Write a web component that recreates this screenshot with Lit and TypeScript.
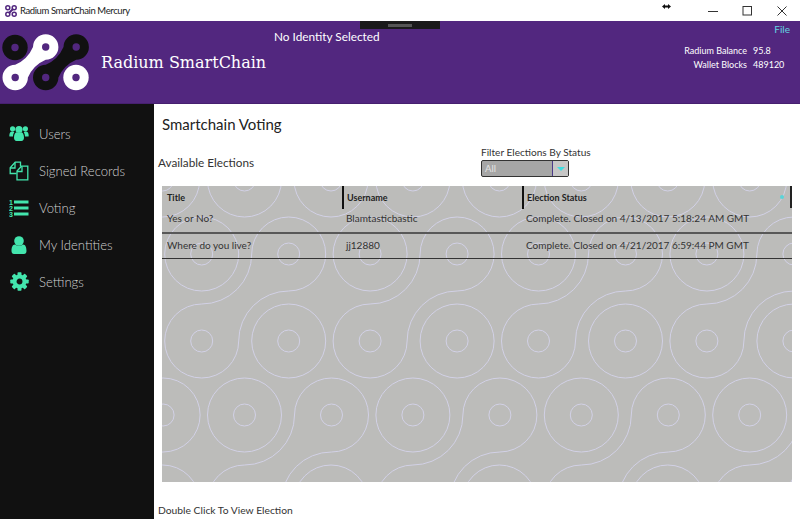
import { LitElement, css, html, svg } from "lit";
import { customElement } from "lit/decorators.js";

// dog-bone outline of one chain link: c1 lower left, c2 upper right
const linkPath = (x: number, y: number, r: number, s: number) => {
  const a = s - r;
  return `M${x} ${y - r}A${a} ${a} 0 0 0 ${x + a} ${y - s}` +
    `A${r} ${r} 0 1 1 ${x + s} ${y - a}` +
    `A${a} ${a} 0 0 0 ${x + r} ${y}` +
    `A${r} ${r} 0 1 1 ${x} ${y - r}Z`;
};

// same link with a thicker waist, for the solid logo
const solidLinkPath = (x: number, y: number, r: number, s: number) => {
  const a = s - r;
  return `M${x} ${y - r}Q${x + 0.7 * a} ${y - r - 0.3 * a} ${x + a} ${y - s}` +
    `A${r} ${r} 0 1 1 ${x + s} ${y - a}` +
    `Q${x + r + 0.3 * a} ${y - 0.7 * a} ${x + r} ${y}` +
    `A${r} ${r} 0 1 1 ${x} ${y - r}Z`;
};

const TILE_W = 168.4;

const buildPattern = () => {
  const rings: [number, number][] = [];
  const links: [number, number][] = [];
  for (let k = -1; k < 5; k++) {
    const dx = k * TILE_W;
    // upper pair of rows
    rings.push([201.7 + dx, 254], [288.7 + dx, 341]);
    links.push([201.7 + dx, 341]);
    // lower pair, also repeated one period up
    for (const dy of [0, -322]) {
      rings.push([244.5 + dx, 415 + dy], [331 + dx, 502 + dy]);
      links.push([244.5 + dx, 502 + dy]);
    }
  }
  const small = [...rings, ...links, ...links.map(([x, y]) => [x + 87, y - 87] as [number, number])];
  return { rings, links, small };
};

const pattern = buildPattern();

const logoLink = (x: number, y: number, fill: string) => svg`
  <path d=${solidLinkPath(x, y, 12.7, 30.5)} fill=${fill} />
  <circle cx=${x} cy=${y} r="3.7" fill="#52277f" />
  <circle cx=${x + 30.5} cy=${y - 30.5} r="3.7" fill="#52277f" />
`;

const logoRing = (x: number, y: number, fill: string) => svg`
  <circle cx=${x} cy=${y} r="12.7" fill=${fill} />
  <circle cx=${x} cy=${y} r="3.7" fill="#52277f" />
`;

const icons = {
  users: html`<svg viewBox="0 0 20 18" width="20" height="18">
    <circle cx="10" cy="4.5" r="3.6" /><circle cx="3.6" cy="3.8" r="2.6" /><circle cx="16.4" cy="3.8" r="2.6" />
    <path d="M0.3 11c0-3 1-4.4 3-4.4 1 0 1.6.4 2 .8-.9 1-1.3 2.3-1.3 4.2H1.6C.8 11.600.3 11.500.3 11Z" />
    <path d="M19.700 11c0-3-1-4.400-3-4.400-1 0-1.600.4-2 .8.9 1 1.300 2.300 1.300 4.200h2.400c.8 0 1.300-.1 1.300-.6Z" />
    <path d="M5 12.500c0-3.500 1.500-5.300 3-5.300.6.5 1.200.8 2 .8s1.400-.3 2-.8c1.500 0 3 1.800 3 5.300 0 2.300-1 3.500-2.500 3.500h-5C6 16 5 14.800 5 12.500Z" />
  </svg>`,
  records: html`<svg viewBox="0 0 20 20" width="20" height="20" fill="none" stroke="#43e5ad" stroke-width="1.300">
    <path d="M7.500 12.500H1.200V6.700L6.200 1.200H11.500V5.500" />
    <path d="M1.200 7H6V1.500" />
    <path d="M8 18.800V10L12.500 5.200H18.800V18.800Z" />
    <path d="M8 10.500H13V5.500" />
  </svg>`,
  voting: html`<svg viewBox="0 0 20 18" width="20" height="18">
    <text x="0" y="5.500" class="num">1</text><text x="0" y="11.500" class="num">2</text><text x="0" y="17.500" class="num">3</text>
    <rect x="5" y="1.500" width="14.500" height="3" /><rect x="5" y="7.500" width="14.500" height="3" /><rect x="5" y="13.500" width="14.500" height="3" />
  </svg>`,
  identity: html`<svg viewBox="0 0 16 18" width="16" height="18">
    <circle cx="8" cy="5" r="4.800" />
    <path d="M0.500 15c0-3.600 1-6.500 3.500-6.500 1.200.8 2.500 1.200 4 1.200s2.800-.4 4-1.200c2.500 0 3.500 2.900 3.500 6.500 0 2-1 3-2.500 3H3C1.500 18 .5 17 .5 15Z" />
  </svg>`,
  settings: html`<svg viewBox="0 0 20 20" width="19" height="19">
    <circle cx="10" cy="10" r="5.200" fill="none" stroke="#43e5ad" stroke-width="4.200" />
    ${[0, 45, 90, 135, 180, 225, 270, 315].map(
      (a) => svg`<rect x="7.900" y="0.300" width="4.200" height="4.500" rx="0.800" transform="rotate(${a} 10 10)" />`
    )}
  </svg>`,
};

const navItems = [
  { label: "Users", icon: icons.users },
  { label: "Signed Records", icon: icons.records },
  { label: "Voting", icon: icons.voting },
  { label: "My Identities", icon: icons.identity },
  { label: "Settings", icon: icons.settings },
];

const elections = [
  { title: "Yes or No?", user: "Blamtasticbastic", status: "Complete. Closed on 4/13/2017 5:18:24 AM GMT" },
  { title: "Where do you live?", user: "jj12880", status: "Complete. Closed on 4/21/2017 6:59:44 PM GMT" },
];

@customElement("app-root")
export class AppRoot extends LitElement {
  render() {
    return html`
      <div class="titlebar">
        <svg class="app-icon" viewBox="0 0 12 12" width="12" height="12" fill="none" stroke="#52277f">
          <circle cx="2.800" cy="2.800" r="2" stroke-width="1.500" />
          <circle cx="9.200" cy="2.800" r="2" stroke-width="1.500" />
          <circle cx="2.800" cy="9.200" r="2" stroke-width="1.500" />
          <circle cx="9.200" cy="9.200" r="2" stroke-width="1.500" />
          <path d="M3.800 8.200L8.200 3.800" stroke-width="2" />
        </svg>
        <span class="app-name">Radium SmartChain Mercury</span>
        <svg class="cursor" viewBox="0 0 9 5" width="9" height="5">
          <path d="M0 2.500L3 0v1.500h3V0l3 2.500L6 5V3.500H3V5Z" fill="#111" />
        </svg>
        <div class="controls">
          <span class="ctl"><svg viewBox="0 0 10 10" width="10" height="10"><path d="M0 5.500h10" stroke="#333" /></svg></span>
          <span class="ctl"><svg viewBox="0 0 10 10" width="10" height="10"><rect x="1" y="0.500" width="8.500" height="8.500" fill="none" stroke="#333" /></svg></span>
          <span class="ctl"><svg viewBox="0 0 10 10" width="10" height="10"><path d="M.5.500l9 9M9.500.500l-9 9" stroke="#333" /></svg></span>
        </div>
      </div>

      <header class="header">
        <div class="tab"><span class="tab-grip"></span></div>
        <svg class="logo" viewBox="0 0 91 60" width="91" height="60">
          ${logoRing(15, 14.5, "#111")}
          ${logoRing(76, 44.5, "#fff")}
          ${logoLink(15.2, 44.5, "#fff")}
          ${logoLink(45.7, 44.5, "#111")}
        </svg>
        <div class="brand">Radium SmartChain</div>
        <div class="identity">No Identity Selected</div>
        <div class="account">
          <span class="file">File</span>
          <div class="stats">
            <span>Radium Balance</span><span>95.8</span>
            <span>Wallet Blocks</span><span>489120</span>
          </div>
        </div>
      </header>

      <div class="body">
        <nav class="sidebar">
          ${navItems.map(
            (item) => html`
              <div class="nav-item">
                <span class="nav-icon">${item.icon}</span>
                <span>${item.label}</span>
              </div>
            `
          )}
        </nav>

        <main class="main">
          <h1 class="heading">Smartchain Voting</h1>
          <div class="toolbar">
            <div class="available">Available Elections</div>
            <div class="filter">
              <div class="filter-label">Filter Elections By Status</div>
              <div class="combo">
                <span class="combo-value">All</span>
                <span class="combo-btn"><span class="combo-arrow"></span></span>
              </div>
            </div>
          </div>

          <div class="table">
            <svg class="pattern" viewBox="162 186 630 296" width="630" height="296" fill="none" stroke="#d2d1e6">
              ${pattern.rings.map(([x, y]) => svg`<circle cx=${x} cy=${y} r="37" />`)}
              ${pattern.links.map(([x, y]) => svg`<path d=${linkPath(x, y, 37, 87)} />`)}
              ${pattern.small.map(([x, y]) => svg`<circle cx=${x} cy=${y} r="11" />`)}
            </svg>
            <div class="row head">
              <div>Title</div>
              <div>Username</div>
              <div>Election Status</div>
              <span class="sort-dot"></span>
            </div>
            ${elections.map(
              (e) => html`
                <div class="row item">
                  <div>${e.title}</div>
                  <div>${e.user}</div>
                  <div>${e.status}</div>
                </div>
              `
            )}
          </div>

          <div class="hint">Double Click To View Election</div>
        </main>
      </div>
    `;
  }

  static styles = css`
    :host {
      display: flex;
      flex-direction: column;
      width: 800px;
      height: 519px;
      overflow: hidden;
      background: #fff;
      font-family: Lato, "Open Sans", sans-serif;
      color: #2b2b2b;
    }

    .titlebar {
      position: relative;
      display: flex;
      align-items: center;
      flex: none;
      height: 21px;
      padding-left: 5px;
      background: #fff;
    }
    .app-icon {
      flex: none;
    }
    .app-name {
      margin-left: 3px;
      font-size: 9.500px;
      letter-spacing: -0.4px;
      color: #222;
    }
    .cursor {
      position: absolute;
      left: 662px;
      top: 4px;
    }
    .controls {
      display: flex;
      margin-left: auto;
      margin-right: 1px;
    }
    .ctl {
      display: flex;
      align-items: center;
      justify-content: center;
      width: 34.5px;
      height: 21px;
    }

    .header {
      position: relative;
      display: flex;
      flex: none;
      height: 83px;
      box-sizing: border-box;
      border-bottom: 1px solid #46206f;
      background: #52277f;
      color: #fff;
    }
    .tab {
      position: absolute;
      left: 360px;
      top: 0;
      display: flex;
      justify-content: center;
      width: 80px;
      height: 8px;
      background: #1a1a1a;
    }
    .tab-grip {
      width: 24px;
      height: 3px;
      margin-top: 3px;
      background: #555;
    }
    .logo {
      flex: none;
      margin-top: 12px;
    }
    .brand {
      flex: none;
      width: 173px;
      margin: 30px 0 0 10px;
      font-family: "DejaVu Serif", "Liberation Serif", serif;
      font-size: 16px;
      line-height: 24px;
      white-space: nowrap;
    }
    .identity {
      margin-top: 8px;
      font-size: 11.800px;
      line-height: 16px;
      white-space: nowrap;
    }
    .account {
      display: flex;
      flex-direction: column;
      align-items: flex-end;
      margin-left: auto;
      padding: 2px 10px 0 0;
    }
    .file {
      font-size: 10px;
      line-height: 12px;
      color: #63d2e2;
    }
    .stats {
      display: grid;
      grid-template-columns: auto 37px;
      column-gap: 6px;
      margin-top: 9px;
      font-size: 9px;
      line-height: 14px;
      text-align: right;
      white-space: nowrap;
    }
    .stats span:nth-child(even) {
      text-align: left;
    }

    .body {
      display: flex;
      flex: 1;
      min-height: 0;
    }
    .sidebar {
      flex: none;
      width: 154px;
      box-sizing: border-box;
      padding-top: 11px;
      background: #111;
      color: #d0d0d0;
    }
    .nav-item {
      display: flex;
      align-items: center;
      height: 37px;
      font-size: 13.100px;
      font-weight: 300;
      white-space: nowrap;
    }
    .nav-icon {
      display: flex;
      align-items: center;
      justify-content: center;
      flex: none;
      width: 20px;
      margin: 0 10px 0 9px;
      fill: #43e5ad;
    }
    .num {
      font-family: "Liberation Sans", sans-serif;
      font-size: 7px;
      font-weight: 700;
      fill: #43e5ad;
    }

    .main {
      flex: 1;
      min-width: 0;
      padding: 10px 0 0 4px;
    }
    .heading {
      margin: 0 0 0 4px;
      font-size: 15px;
      font-weight: 400;
      line-height: 20px;
      color: #222;
    }
    .toolbar {
      display: flex;
      height: 31px;
      margin: 12px 0 9px;
    }
    .available {
      width: 323px;
      margin-top: 9px;
      font-size: 11.750px;
      line-height: 16px;
      color: #333;
    }
    .filter-label {
      margin-top: -1px;
      font-size: 10.100px;
      line-height: 14px;
      color: #333;
    }
    .combo {
      display: flex;
      box-sizing: border-box;
      width: 88px;
      height: 17px;
      margin-top: 1px;
      border: 1px solid #333;
      border-radius: 2px;
      background: #a6a6a6;
    }
    .combo-value {
      flex: 1;
      padding-left: 3px;
      font-size: 9.500px;
      line-height: 15px;
      color: #e4e4e4;
    }
    .combo-btn {
      display: flex;
      align-items: center;
      justify-content: center;
      width: 15px;
      border-left: 1px solid #4b3a8a;
      background: #c6c6c6;
    }
    .combo-arrow {
      width: 0;
      height: 0;
      border-style: solid;
      border-width: 4px 4px 0;
      border-color: #3fdde0 transparent transparent;
    }

    .table {
      position: relative;
      width: 630px;
      height: 296px;
      margin-left: 4px;
      background: #bcbcba;
    }
    .pattern {
      position: absolute;
      inset: 0;
    }
    .row {
      position: relative;
      display: grid;
      grid-template-columns: 180px 180px 1fr;
      box-sizing: border-box;
    }
    .head {
      height: 22px;
      font-size: 9px;
      font-weight: 700;
      line-height: 23px;
      color: #222;
      border-right: 2px solid #222;
    }
    .head > div {
      padding-left: 5px;
    }
    .head > div + div {
      padding-left: 3px;
      border-left: 2px solid #111;
    }
    .sort-dot {
      position: absolute;
      right: 6px;
      top: 9px;
      width: 4px;
      height: 4px;
      border-radius: 50%;
      background: #5ad4d8;
    }
    .item {
      height: 26px;
      font-size: 10px;
      line-height: 21px;
      color: #333;
      border-bottom: 2px solid #585858;
    }
    .item + .item {
      height: 25px;
      line-height: 22px;
      border-bottom: 1px solid #333;
    }
    .item > div {
      padding-left: 4px;
    }
    .item > div:first-child {
      padding-left: 5px;
    }

    .hint {
      margin-top: 21px;
      font-size: 10.300px;
      line-height: 14px;
      color: #333;
    }
  `;
}
